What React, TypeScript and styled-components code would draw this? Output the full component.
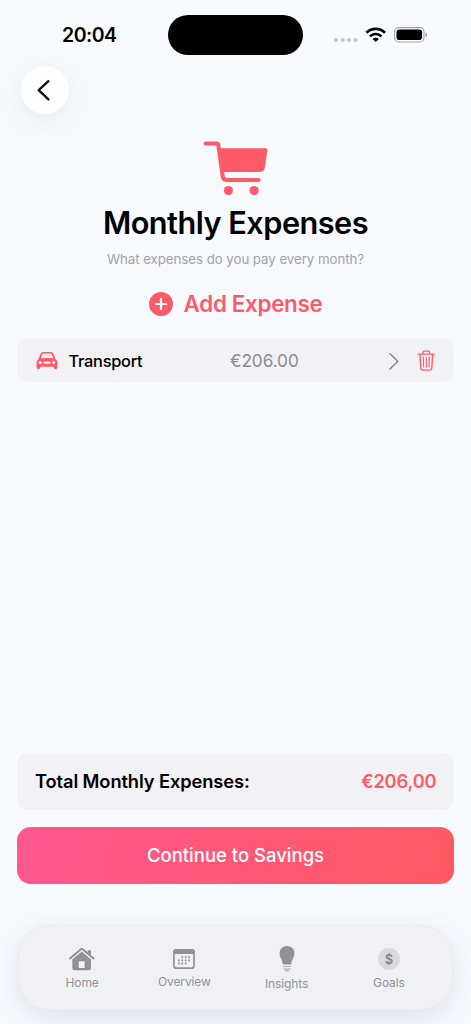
import React from "react";
import styled, { createGlobalStyle } from "styled-components";

const GlobalStyle = createGlobalStyle`
  * { box-sizing: border-box; }
  body { margin: 0; background: #f7faff; font-family: Inter, "Liberation Sans", sans-serif; }
  button { font: inherit; border: 0; padding: 0; background: none; color: inherit; }
  svg { display: block; flex: none; }
`;

const CORAL = "#ff5a67";

const Screen = styled.main`
  width: 471px;
  height: 1024px;
  display: flex;
  flex-direction: column;
  overflow: hidden;
  background: #f7faff;
  color: #000;
`;

const StatusBar = styled.header`
  height: 66px;
  display: grid;
  grid-template-columns: 168px 135px 1fr;
  padding-top: 15px;
`;

const Clock = styled.time`
  padding-left: 62px;
  font-size: 19.5px;
  line-height: 40px;
  font-weight: 600;
  letter-spacing: -0.5px;
`;

const Island = styled.div`
  height: 39.5px;
  border-radius: 20px;
  background: #000;
`;

const StatusIcons = styled.div`
  height: 40px;
  padding-left: 31px;
  display: flex;
`;

const BackButton = styled.button`
  width: 48px;
  height: 48px;
  margin-left: 21px;
  flex: none;
  border-radius: 50%;
  background: #fdfeff;
  box-shadow: 0 7px 30px rgba(40, 50, 70, 0.09);
`;

const Intro = styled.section`
  height: 225px;
  padding-top: 26px;
  flex: none;
  display: flex;
  flex-direction: column;
  align-items: center;
`;

const Title = styled.h1`
  margin: 7px 0 0;
  font-size: 30.7px;
  line-height: 40px;
  font-weight: 600;
  letter-spacing: -0.52px;
  white-space: nowrap;
`;

const Subtitle = styled.p`
  margin: 6px 0 0;
  font-size: 13.3px;
  line-height: 20px;
  letter-spacing: -0.06px;
  color: #a1a3a7;
  white-space: nowrap;
`;

const AddButton = styled.button`
  height: 30px;
  margin-top: 20px;
  display: flex;
  align-items: center;
  gap: 11px;
  color: ${CORAL};
  font-size: 22.4px;
  line-height: 30px;
  font-weight: 600;
  letter-spacing: -0.32px;
  white-space: nowrap;
`;

const Card = styled.div<{ $height: number }>`
  height: ${(p) => p.$height}px;
  margin: 0 17px;
  flex: none;
  display: flex;
  align-items: center;
  border-radius: 11px;
  background: #f2f1f6;
  white-space: nowrap;
`;

const ExpenseName = styled.span`
  width: 170px;
  padding-left: 8.5px;
  font-size: 16.4px;
  font-weight: 500;
  letter-spacing: -0.27px;
`;

const ExpenseAmount = styled.span`
  width: 157.5px;
  color: #8b8b90;
  font-size: 17.2px;
  letter-spacing: -0.05px;
`;

const Spacer = styled.div`
  flex: 1;
`;

const TotalLabel = styled.span`
  flex: 1;
  padding: 0 0 1px 18px;
  font-size: 18.3px;
  font-weight: 600;
  letter-spacing: -0.1px;
`;

const TotalAmount = styled.strong`
  padding: 0 17.5px 1px 0;
  color: ${CORAL};
  font-size: 18.3px;
  font-weight: 600;
  letter-spacing: -0.15px;
`;

const ContinueButton = styled.button`
  height: 57px;
  margin: 17px 17px 0;
  padding-bottom: 1px;
  flex: none;
  border-radius: 14px;
  background: linear-gradient(105deg, #ff5790 0%, #ff5878 50%, #ff5a63 100%);
  color: #fff;
  font-size: 18.5px;
  font-weight: 500;
`;

const TabBar = styled.nav`
  height: 85px;
  margin: 41px 18px 14px;
  padding: 0 12px;
  flex: none;
  display: grid;
  grid-template-columns: repeat(4, 1fr);
  border: 1px solid #e9ebf0;
  border-radius: 32px;
  background: #f0f1f5;
  box-shadow: 0 8px 30px rgba(50, 55, 75, 0.13);
`;

const Tab = styled.button<{ $top: number; $gap: number }>`
  display: flex;
  flex-direction: column;
  align-items: center;
  justify-content: flex-start;
  gap: ${(p) => p.$gap}px;
  padding-top: ${(p) => p.$top}px;
  color: #919297;
  font-size: 12px;
  line-height: 16px;
  letter-spacing: -0.12px;
`;

const StatusGlyphs = () => (
  <svg width="95" height="40" viewBox="334 15 95 40">
    {[336, 342.6, 349, 355.5].map((x) => (
      <circle key={x} cx={x} cy="40" r="2.1" fill="#c7c9cd" />
    ))}
    <g fill="none" stroke="#000" strokeWidth="2.7">
      <path d="M366.4 32.8a13.2 13.2 0 0 1 18.6 0" />
      <path d="M369.9 36.4a8.2 8.2 0 0 1 11.6 0" />
    </g>
    <path d="M372.6 39.1a4.4 4.4 0 0 1 6.2 0l-3.1 3z" />
    <rect x="394.6" y="27.6" width="29.4" height="14.4" rx="4.5" fill="#fff" stroke="#9b9da0" strokeWidth="1.1" />
    <rect x="396.5" y="29.6" width="25.6" height="10.5" rx="2.8" />
    <path d="M425.5 32.3q1.7.6 1.7 2.5t-1.7 2.5z" fill="#9b9da0" />
  </svg>
);

const BackIcon = () => (
  <svg width="48" height="48" viewBox="0 0 48 48">
    <path d="M27.4 15.2 17.7 24.2 27.4 33.4" fill="none" stroke="#111315" strokeWidth="2.4" strokeLinecap="round" strokeLinejoin="round" />
  </svg>
);

const CartIcon = () => (
  <svg width="64" height="56" viewBox="203.6 140 64 56" overflow="visible" fill={CORAL}>
    <path d="M205.2 143.6h11.2q1.3 0 1.5 1.3l4.4 31.3q.5 3.8 4.3 3.8h31.6" fill="none" stroke={CORAL} strokeWidth="4" strokeLinecap="round" strokeLinejoin="round" />
    <path d="M218.5 148.2h46.7q2.1 0 1.8 2.1l-2.4 16.8q-.7 4.9-5.6 4.9h-37.2z" />
    <circle cx="228" cy="190.6" r="4.6" />
    <circle cx="253.7" cy="190.6" r="4.6" />
  </svg>
);

const PlusIcon = () => (
  <svg width="24" height="24" viewBox="0 0 24 24">
    <circle cx="12" cy="12" r="12" fill={CORAL} />
    <path d="M12 6.9v10.2M6.9 12h10.2" stroke="#fff" strokeWidth="2.2" strokeLinecap="round" />
  </svg>
);

const CarIcon = () => (
  <svg width="43" height="43" viewBox="17.3 339 43 43">
    <path fillRule="evenodd" fill={CORAL} d="M38.8 359.3l2-5.5q.7-1.6 2.5-1.7 4-.3 8 0 1.8.1 2.5 1.7l2 5.5q1.9 1 1.9 3.3v5q0 1.4-1.4 1.4h-.8q-1.4 0-1.4-1.4v-.9H40.5v.9q0 1.4-1.4 1.4h-.8q-1.4 0-1.4-1.4v-5q0-2.3 1.9-3.3zM41.2 358.3q6.1-.7 12.2 0l-1.4-3.9q-.2-.7-1-.8-3.7-.3-7.4 0-.8.1-1 .8zM40.6 361.1a1.5 1.5 0 1 0 0 3a1.5 1.5 0 1 0 0-3zM54 361.1a1.5 1.5 0 1 0 0 3a1.5 1.5 0 1 0 0-3zM45 361.4q-1.2 0-1.2 1.2t1.2 1.2h4.7q1.2 0 1.2-1.2t-1.2-1.2z" />
  </svg>
);

const ChevronIcon = () => (
  <svg width="12" height="18" viewBox="0 0 12 18">
    <path d="M2 1.7 9.7 9.3 2 17" fill="none" stroke="#85868b" strokeWidth="1.5" strokeLinecap="round" strokeLinejoin="round" />
  </svg>
);

const TrashButton = styled.button`
  margin-left: 16px;
`;

const TrashIcon = () => (
  <svg width="20" height="23" viewBox="416 349 20 23" fill="none" stroke={CORAL} strokeWidth="1.35" strokeLinecap="round" strokeLinejoin="round">
    <path d="M418.3 354.1h16M423 354v-1.4q0-1.5 1.5-1.5h3.5q1.5 0 1.5 1.5v1.4M420 354.3l.8 14q.1 1.8 1.9 1.8h7.2q1.8 0 1.9-1.8l.8-14" />
    <path d="M423.3 357l.3 10M426.3 357v10M429.3 357l-.3 10" strokeWidth="1.1" />
  </svg>
);

const HomeIcon = () => (
  <svg width="26" height="24" viewBox="69 947 26 24">
    <path d="M70 958.4 81.2 949q.6-.4 1.2 0l11.2 9.4" fill="none" stroke="#919297" strokeWidth="2" strokeLinecap="round" strokeLinejoin="round" />
    <path d="M87.7 950.2h3.3v5.6l-3.3-2.8z" fill="#919297" />
    <path fillRule="evenodd" fill="#919297" d="M72.3 959.5l9.5-8 9.2 8v8.4q0 2.3-2.3 2.3H74.6q-2.3 0-2.3-2.3zM79.2 961.2q-.5 0-.5.5v6.3h6v-6.3q0-.5-.5-.5z" />
  </svg>
);

const CalendarIcon = () => (
  <svg width="22" height="20" viewBox="0 0 22 20">
    <rect x=".9" y=".8" width="20.1" height="18.4" rx="2.5" fill="none" stroke="#919297" strokeWidth="1.7" />
    <path d="M.1 5V3Q.1 0 3.1 0h15.7q3 0 3 3v2z" fill="#919297" />
    {[
      [8.4, 7.2], [11.8, 7.2], [15.2, 7.2],
      [5, 10.4], [8.4, 10.4], [11.8, 10.4], [15.2, 10.4],
      [5, 13.6], [8.4, 13.6], [11.8, 13.6],
    ].map(([x, y]) => (
      <rect key={`${x}-${y}`} x={x} y={y} width="1.8" height="1.8" rx=".4" fill="#919297" />
    ))}
  </svg>
);

const BulbIcon = () => (
  <svg width="16" height="27" viewBox="279 945 16 27" fill="#919297">
    <path d="M287 946c4.4 0 7.4 3.1 7.4 7.2 0 4.7-2.6 5.4-3.2 11.4h-8.4c-.6-6-3.2-6.7-3.2-11.4 0-4.1 3-7.2 7.4-7.2z" />
    <path d="M282.9 966.1h8.2v1h-8.2zM283.1 968.4h7.8q-.1 1-1 1h-5.8q-.9 0-1-1zM284.4 970.1h5.2q-.8 1.3-2.6 1.3t-2.6-1.3z" opacity=".7" />
  </svg>
);

const Coin = styled.span`
  width: 22px;
  height: 22px;
  border-radius: 50%;
  background: #d9dade;
  color: #85868b;
  font-size: 13px;
  line-height: 22px;
  font-weight: 600;
  text-align: center;
`;

export default function App() {
  return (
    <>
      <GlobalStyle />
      <Screen>
        <StatusBar>
          <Clock>20:04</Clock>
          <Island />
          <StatusIcons><StatusGlyphs /></StatusIcons>
        </StatusBar>
        <BackButton aria-label="Back"><BackIcon /></BackButton>
        <Intro>
          <CartIcon />
          <Title>Monthly Expenses</Title>
          <Subtitle>What expenses do you pay every month?</Subtitle>
          <AddButton><PlusIcon />Add Expense</AddButton>
        </Intro>
        <Card $height={43}>
          <CarIcon />
          <ExpenseName>Transport</ExpenseName>
          <ExpenseAmount>€206.00</ExpenseAmount>
          <ChevronIcon />
          <TrashButton aria-label="Delete"><TrashIcon /></TrashButton>
        </Card>
        <Spacer />
        <Card $height={57}>
          <TotalLabel>Total Monthly Expenses:</TotalLabel>
          <TotalAmount>€206,00</TotalAmount>
        </Card>
        <ContinueButton>Continue to Savings</ContinueButton>
        <TabBar>
          <Tab $top={21} $gap={4}><HomeIcon />Home</Tab>
          <Tab $top={23} $gap={5}><CalendarIcon />Overview</Tab>
          <Tab $top={19} $gap={4}><BulbIcon />Insights</Tab>
          <Tab $top={22} $gap={5}><Coin>$</Coin>Goals</Tab>
        </TabBar>
      </Screen>
    </>
  );
}
